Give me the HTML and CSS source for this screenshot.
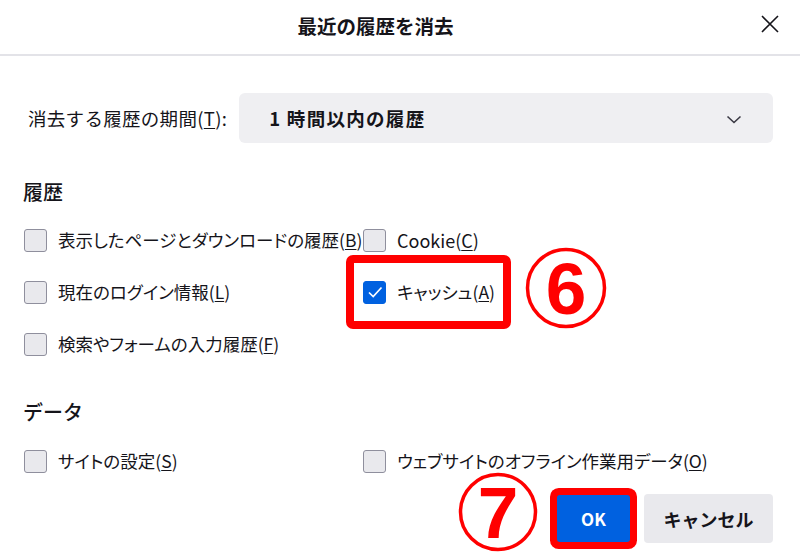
FILE: index.html
```html
<!DOCTYPE html>
<html lang="ja">
<head>
<meta charset="utf-8">
<title>最近の履歴を消去</title>
<link rel="stylesheet" href="styles.css">
</head>
<body>
<div class="dialog">
  <header class="head">
    <h1 class="title">最近の履歴を消去</h1>
    <button class="close" aria-label="閉じる">
      <svg width="18" height="18" viewBox="0 0 18 18"><path d="M1 1L17 17M17 1L1 17" stroke="#15141a" stroke-width="1.6" fill="none"/></svg>
    </button>
  </header>

  <div class="period">
    <span class="period-label">消去する履歴の期間(<u>T</u>):</span>
    <div class="select">
      <span class="select-value">1 時間以内の履歴</span>
      <svg class="chev" width="16" height="9" viewBox="0 0 16 9"><path d="M1.5 1.5L8 7.5L14.5 1.5" stroke="#3a3944" stroke-width="1.6" fill="none"/></svg>
    </div>
  </div>

  <h2 class="section">履歴</h2>
  <div class="grid">
    <label class="item"><span class="box"></span><span class="txt">表示したページとダウンロードの履歴(<u>B</u>)</span></label>
    <label class="item"><span class="box"></span><span class="txt lat">Cookie(<u>C</u>)</span></label>
    <label class="item"><span class="box"></span><span class="txt">現在のログイン情報(<u>L</u>)</span></label>
    <label class="item marked"><span class="box checked"><svg width="22" height="22" viewBox="0 0 22 22"><path d="M5 11.5L9.2 15.5L17.5 6.5" stroke="#fff" stroke-width="1.7" fill="none"/></svg></span><span class="txt">キャッシュ(<u>A</u>)</span></label>
    <label class="item"><span class="box"></span><span class="txt">検索やフォームの入力履歴(<u>F</u>)</span></label>
  </div>

  <h2 class="section data">データ</h2>
  <div class="grid grid-data">
    <label class="item"><span class="box"></span><span class="txt">サイトの設定(<u>S</u>)</span></label>
    <label class="item"><span class="box"></span><span class="txt">ウェブサイトのオフライン作業用データ(<u>O</u>)</span></label>
  </div>

  <div class="buttons">
    <button class="btn primary">OK</button>
    <button class="btn">キャンセル</button>
  </div>

  <svg class="badge badge6" width="84" height="82" viewBox="0 0 84 82"><circle cx="42" cy="41" r="38.5" stroke="#f00" stroke-width="3.5" fill="none"/><text x="42" y="67" text-anchor="middle" font-family="Liberation Sans, Arial, sans-serif" font-weight="700" font-size="73" fill="#f00">6</text></svg>
  <svg class="badge badge7" width="82" height="80" viewBox="0 0 82 80"><circle cx="41" cy="40" r="37.5" stroke="#f00" stroke-width="3.5" fill="none"/><text x="41" y="66" text-anchor="middle" font-family="Liberation Sans, Arial, sans-serif" font-weight="700" font-size="73" fill="#f00">7</text></svg>
</div>
</body>
</html>
```

FILE: styles.css
```css
* { box-sizing: border-box; }
html, body { margin: 0; padding: 0; background: #fff; }
body {
  width: 800px;
  height: 560px;
  overflow: hidden;
  font-family: "Noto Sans CJK JP", "Noto Sans", sans-serif;
  color: #15141a;
  font-size: 17px;
}
.dialog { position: relative; width: 800px; height: 560px; }
u { text-decoration-thickness: 1px; text-underline-offset: 2px; }

.head {
  display: flex;
  align-items: center;
  height: 56px;
  border-bottom: 2px solid #e3e3e8;
  padding-right: 11px;
}
.title {
  flex: 1;
  margin: 0;
  text-align: center;
  font-size: 19.5px;
  font-weight: 700;
  line-height: 28px;
  margin-top: -3px;
}
.close {
  width: 38px;
  height: 38px;
  border: 0;
  background: transparent;
  display: flex;
  align-items: center;
  justify-content: center;
  padding: 0;
  margin-top: -6px;
}

.period {
  display: flex;
  align-items: center;
  margin: 37px 27px 0 24px;
  gap: 12px;
}
.period-label {
  padding-left: 4px;
  white-space: nowrap;
  line-height: 24px;
  font-size: 18.5px;
  letter-spacing: 0.3px;
}
.select {
  flex: 1;
  height: 50px;
  background: #efeff2;
  border-radius: 6px;
  display: flex;
  align-items: center;
  justify-content: space-between;
  padding: 0 31px 0 30px;
}
.select-value { font-weight: 700; font-size: 18.5px; letter-spacing: 1.3px; }
.chev { margin-top: 2px; }

.section {
  margin: 35px 0 0 23px;
  font-size: 20px;
  font-weight: 500;
  line-height: 28px;
}
.section.data { margin-top: 28px; }

.grid {
  display: grid;
  grid-template-columns: 340px 1fr;
  grid-auto-rows: 52px;
  margin: 8px 0 0 24px;
}
.grid-data { margin-top: 9px; }
.item {
  display: flex;
  align-items: center;
  gap: 11px;
  white-space: nowrap;
  line-height: 24px;
  justify-self: start;
}
.txt { font-size: 17.5px; font-feature-settings: "palt"; }
.txt.lat { font-size: 18px; font-feature-settings: normal; }
.item:nth-child(2n) { margin-left: -1px; }
.box {
  width: 23px;
  height: 23px;
  flex: none;
  border: 1px solid #8f8f9d;
  background: #e9e9ed;
  border-radius: 3px;
}
.box.checked {
  background: #0061e0;
  border-color: #0061e0;
  display: flex;
  align-items: center;
  justify-content: center;
}
.box.checked svg { flex: none; }
.marked { position: relative; }
.marked::after {
  content: "";
  position: absolute;
  left: -17px;
  right: -16px;
  top: 0;
  bottom: 0;
  height: 58px;
  margin: auto 0;
  border: 8px solid #f00;
  border-radius: 7px;
}

.buttons {
  display: flex;
  justify-content: flex-end;
  gap: 14px;
  margin: 7px 27px 0 0;
}
.btn {
  height: 49px;
  width: 129px;
  border: 0;
  border-radius: 4px;
  background: #e9e9ed;
  color: #15141a;
  font-family: "Noto Sans CJK JP", "Noto Sans", sans-serif;
  font-size: 18px;
  font-weight: 700;
  padding: 0;
}
.btn.primary {
  width: 73px;
  height: 47px;
  margin-top: 1px;
  background: #0061e0;
  color: #fff;
  font-size: 17px;
  box-shadow: 0 0 0 7px #f00;
  border-radius: 3px;
}

.badge { position: absolute; }
.badge6 { left: 524px; top: 247px; }
.badge7 { left: 457px; top: 472px; }
```
